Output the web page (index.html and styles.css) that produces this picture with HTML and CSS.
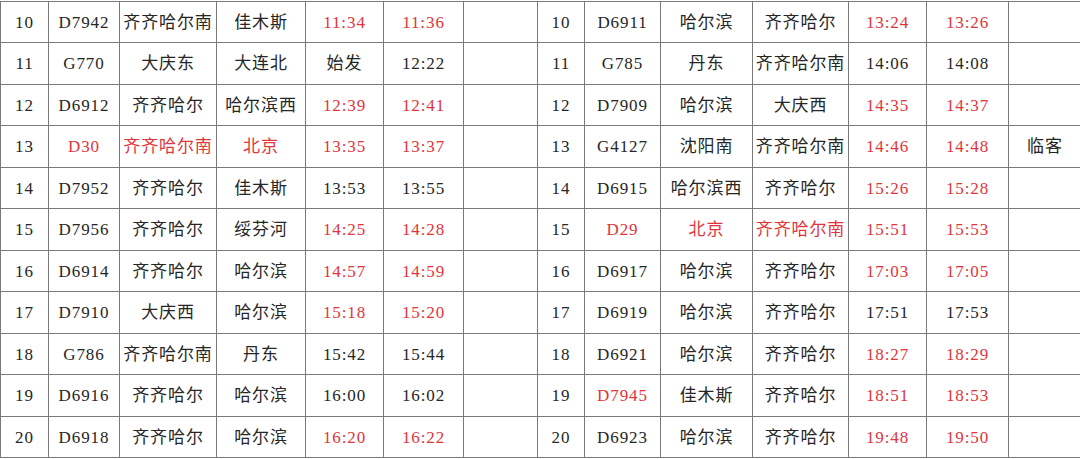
FILE: index.html
```html
<!DOCTYPE html>
<html lang="zh-CN">
<head>
<meta charset="utf-8">
<title>列车时刻表</title>
<link rel="stylesheet" href="styles.css">
</head>
<body>
<table class="timetable">
  <colgroup>
    <col class="c1"><col class="c2"><col class="c3"><col class="c4"><col class="c5"><col class="c6"><col class="c7">
    <col class="d1"><col class="d2"><col class="d3"><col class="d4"><col class="d5"><col class="d6"><col class="d7">
  </colgroup>
  <tbody>
    <tr>
      <td>10</td><td>D7942</td><td>齐齐哈尔南</td><td>佳木斯</td><td class="red">11:34</td><td class="red">11:36</td><td></td>
      <td>10</td><td>D6911</td><td>哈尔滨</td><td>齐齐哈尔</td><td class="red">13:24</td><td class="red">13:26</td><td></td>
    </tr>
    <tr>
      <td>11</td><td>G770</td><td>大庆东</td><td>大连北</td><td>始发</td><td>12:22</td><td></td>
      <td>11</td><td>G785</td><td>丹东</td><td>齐齐哈尔南</td><td>14:06</td><td>14:08</td><td></td>
    </tr>
    <tr>
      <td>12</td><td>D6912</td><td>齐齐哈尔</td><td>哈尔滨西</td><td class="red">12:39</td><td class="red">12:41</td><td></td>
      <td>12</td><td>D7909</td><td>哈尔滨</td><td>大庆西</td><td class="red">14:35</td><td class="red">14:37</td><td></td>
    </tr>
    <tr>
      <td>13</td><td class="red">D30</td><td class="red">齐齐哈尔南</td><td class="red">北京</td><td class="red">13:35</td><td class="red">13:37</td><td></td>
      <td>13</td><td>G4127</td><td>沈阳南</td><td>齐齐哈尔南</td><td class="red">14:46</td><td class="red">14:48</td><td>临客</td>
    </tr>
    <tr>
      <td>14</td><td>D7952</td><td>齐齐哈尔</td><td>佳木斯</td><td>13:53</td><td>13:55</td><td></td>
      <td>14</td><td>D6915</td><td>哈尔滨西</td><td>齐齐哈尔</td><td class="red">15:26</td><td class="red">15:28</td><td></td>
    </tr>
    <tr>
      <td>15</td><td>D7956</td><td>齐齐哈尔</td><td>绥芬河</td><td class="red">14:25</td><td class="red">14:28</td><td></td>
      <td>15</td><td class="red">D29</td><td class="red">北京</td><td class="red">齐齐哈尔南</td><td class="red">15:51</td><td class="red">15:53</td><td></td>
    </tr>
    <tr>
      <td>16</td><td>D6914</td><td>齐齐哈尔</td><td>哈尔滨</td><td class="red">14:57</td><td class="red">14:59</td><td></td>
      <td>16</td><td>D6917</td><td>哈尔滨</td><td>齐齐哈尔</td><td class="red">17:03</td><td class="red">17:05</td><td></td>
    </tr>
    <tr>
      <td>17</td><td>D7910</td><td>大庆西</td><td>哈尔滨</td><td class="red">15:18</td><td class="red">15:20</td><td></td>
      <td>17</td><td>D6919</td><td>哈尔滨</td><td>齐齐哈尔</td><td>17:51</td><td>17:53</td><td></td>
    </tr>
    <tr>
      <td>18</td><td>G786</td><td>齐齐哈尔南</td><td>丹东</td><td>15:42</td><td>15:44</td><td></td>
      <td>18</td><td>D6921</td><td>哈尔滨</td><td>齐齐哈尔</td><td class="red">18:27</td><td class="red">18:29</td><td></td>
    </tr>
    <tr>
      <td>19</td><td>D6916</td><td>齐齐哈尔</td><td>哈尔滨</td><td>16:00</td><td>16:02</td><td></td>
      <td>19</td><td class="red">D7945</td><td>佳木斯</td><td>齐齐哈尔</td><td class="red">18:51</td><td class="red">18:53</td><td></td>
    </tr>
    <tr>
      <td>20</td><td>D6918</td><td>齐齐哈尔</td><td>哈尔滨</td><td class="red">16:20</td><td class="red">16:22</td><td></td>
      <td>20</td><td>D6923</td><td>哈尔滨</td><td>齐齐哈尔</td><td class="red">19:48</td><td class="red">19:50</td><td></td>
    </tr>
  </tbody>
</table>
</body>
</html>
```

FILE: styles.css
```css
html, body {
  margin: 0;
  padding: 0;
  background: #ffffff;
  overflow: hidden;
}

body {
  padding-top: 1px;
}

.timetable {
  border-collapse: collapse;
  table-layout: fixed;
  width: 1081px;
  margin-top: -0.5px;
  font-family: "Liberation Serif", "Noto Sans CJK SC", serif;
  font-size: 17px;
  color: #262626;
}

.c1 { width: 48px; }
.c2 { width: 71px; }
.c3 { width: 97px; }
.c4 { width: 89px; }
.c5 { width: 78px; }
.c6 { width: 80px; }
.c7 { width: 74px; }
.d1 { width: 47px; }
.d2 { width: 76px; }
.d3 { width: 92px; }
.d4 { width: 96px; }
.d5 { width: 78px; }
.d6 { width: 82px; }
.d7 { width: 73px; }

.timetable td {
  height: 41.5px;
  padding: 1px 0 0;
  box-sizing: border-box;
  border: 1px solid #7a7a7a;
  text-align: center;
  vertical-align: middle;
  white-space: nowrap;
  letter-spacing: 0.9px;
  line-height: 1;
}

.timetable .red {
  color: #e3343b;
}
```
